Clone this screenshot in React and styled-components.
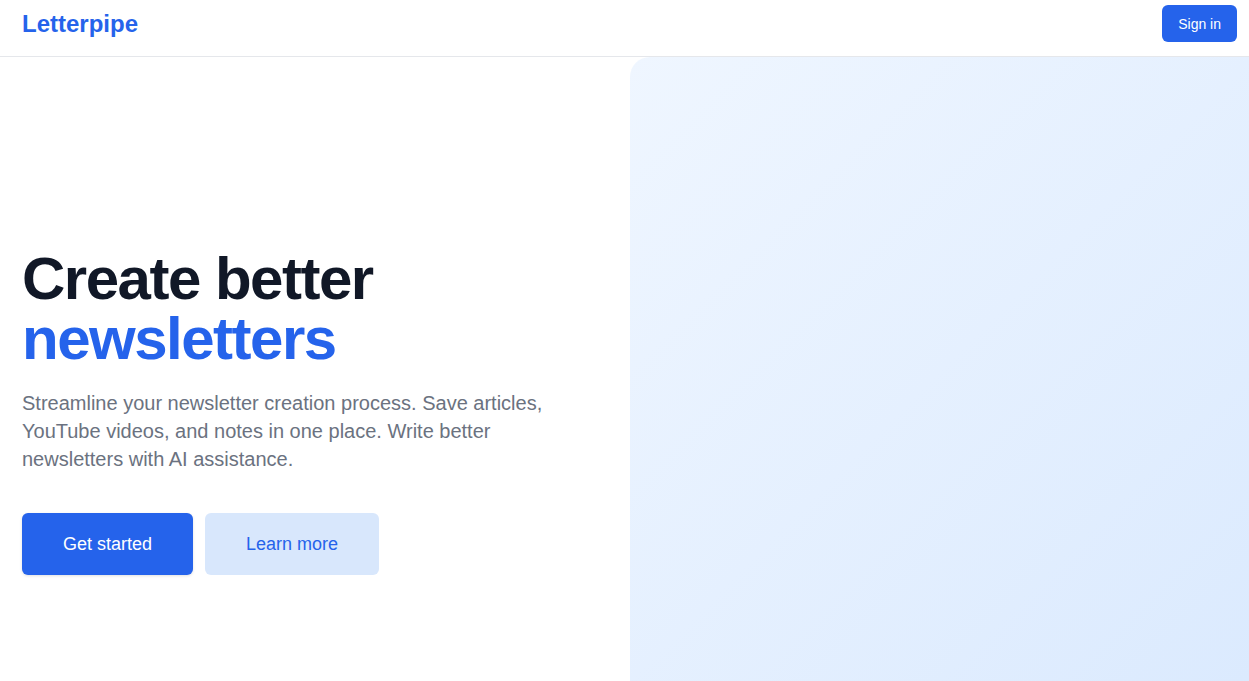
import React from 'react';
import styled, { createGlobalStyle } from 'styled-components';

const GlobalStyle = createGlobalStyle`
  *, *:before, *:after {
    box-sizing: border-box;
  }
  html, body {
    margin: 0;
    padding: 0;
    background: #ffffff;
    font-family: "Liberation Sans", Arial, sans-serif;
    overflow: hidden;
  }
`;

const Header = styled.header`
  height: 57px;
  display: flex;
  align-items: flex-start;
  justify-content: space-between;
  padding: 5px 12px 0 22px;
  border-bottom: 1px solid #e5e7eb;
`;

const Logo = styled.div`
  font-size: 24px;
  line-height: 37px;
  font-weight: 700;
  color: #2563eb;
`;

const SignIn = styled.button`
  height: 37px;
  padding: 0 16px;
  border: none;
  border-radius: 6px;
  background: #2563eb;
  color: #ffffff;
  font-family: inherit;
  font-size: 14px;
  cursor: pointer;
`;

const Main = styled.main`
  display: grid;
  grid-template-columns: 630px 1fr;
  height: calc(100vh - 57px);
`;

const Left = styled.section`
  padding: 192px 20px 0 22px;
`;

const Title = styled.h1`
  margin: 0;
  font-size: 60px;
  line-height: 60px;
  font-weight: 700;
  letter-spacing: -1.5px;
  color: #111827;
`;

const Accent = styled.span`
  display: block;
  color: #2563eb;
`;

const Lead = styled.p`
  margin: 20px 0 0;
  max-width: 560px;
  font-size: 20px;
  line-height: 28px;
  color: #6b7280;
`;

const Actions = styled.div`
  display: flex;
  gap: 12px;
  margin-top: 40px;
`;

const Button = styled.button`
  height: 62px;
  padding: 0 41px;
  border: none;
  border-radius: 6px;
  font-family: inherit;
  font-size: 18px;
  cursor: pointer;
  background: ${p => (p.$primary ? '#2563eb' : '#d8e7fc')};
  color: ${p => (p.$primary ? '#ffffff' : '#2563eb')};
  box-shadow: ${p => (p.$primary ? '0 1px 3px rgba(0,0,0,0.12)' : 'none')};
`;

const Visual = styled.div`
  border-top-left-radius: 20px;
  background: linear-gradient(135deg, #eff6ff 0%, #dbeafe 100%);
`;

export default function App() {
  return (
    <>
      <GlobalStyle />
      <Header>
        <Logo>Letterpipe</Logo>
        <SignIn>Sign in</SignIn>
      </Header>
      <Main>
        <Left>
          <Title>
            Create better
            <Accent>newsletters</Accent>
          </Title>
          <Lead>
            Streamline your newsletter creation process. Save articles, YouTube videos, and notes in one place. Write better newsletters with AI assistance.
          </Lead>
          <Actions>
            <Button $primary>Get started</Button>
            <Button>Learn more</Button>
          </Actions>
        </Left>
        <Visual />
      </Main>
    </>
  );
}
